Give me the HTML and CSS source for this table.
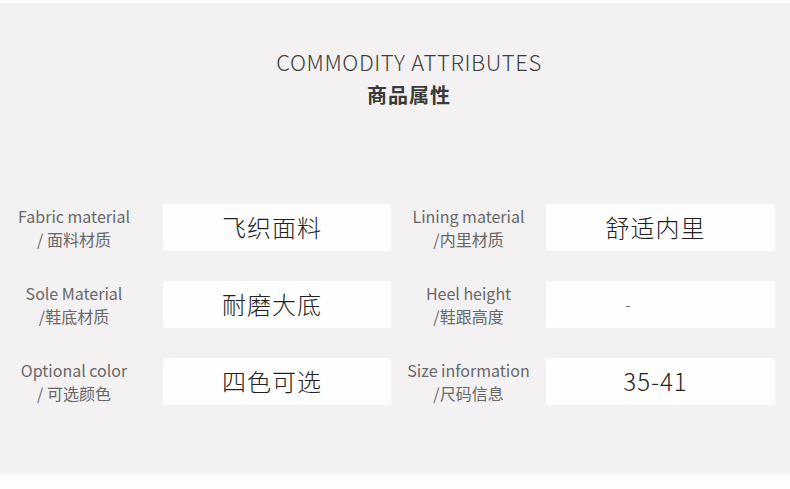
FILE: index.html
```html
<!DOCTYPE html>
<html lang="zh-CN">
<head>
<meta charset="utf-8">
<link rel="stylesheet" href="styles.css">
</head>
<body>
<section class="panel">
  <header class="head">
    <h1 class="title-en">COMMODITY ATTRIBUTES</h1>
    <h2 class="title-cn">商品属性</h2>
  </header>
  <div class="attrs">
    <div class="label"><span>Fabric material</span><span>/ 面料材质</span></div>
    <div class="value">飞织面料</div>
    <div class="label"><span>Lining material</span><span>/内里材质</span></div>
    <div class="value">舒适内里</div>

    <div class="label"><span>Sole Material</span><span>/鞋底材质</span></div>
    <div class="value">耐磨大底</div>
    <div class="label"><span>Heel height</span><span>/鞋跟高度</span></div>
    <div class="value dash">-</div>

    <div class="label"><span>Optional color</span><span>/ 可选颜色</span></div>
    <div class="value">四色可选</div>
    <div class="label"><span>Size information</span><span>/尺码信息</span></div>
    <div class="value">35-41</div>
  </div>
</section>
</body>
</html>
```

FILE: styles.css
```css
html, body {
  margin: 0;
  padding: 0;
  background: #fdfdfd;
}
body {
  font-family: "Noto Sans CJK SC", "Noto Sans", sans-serif;
  width: 790px;
  height: 489px;
  overflow: hidden;
}
.panel {
  margin-top: 3px;
  height: 471px;
  background: #f3f1f2;
  box-sizing: border-box;
  padding-top: 44px;
}
.head {
  text-align: center;
  padding-left: 28px;
}
.title-en {
  margin: 0;
  font-size: 22px;
  font-weight: 300;
  color: #3f3f3f;
  line-height: 28px;
  letter-spacing: 0.6px;
}
.title-cn {
  margin: 7px 0 0;
  font-size: 20px;
  font-weight: 700;
  color: #3a3a3a;
  line-height: 26px;
  letter-spacing: 1px;
}
.attrs {
  margin-top: 96px;
  display: grid;
  grid-template-columns: 148px 243px 155px 229px;
  row-gap: 30px;
  grid-auto-rows: 47px;
}
.attrs > .value:nth-child(4n+2) {
  margin-left: 15px;
}
.label {
  text-align: center;
  font-size: 16px;
  line-height: 23px;
  color: #686868;
  font-weight: 400;
  display: flex;
  flex-direction: column;
  justify-content: center;
}
.value {
  background: #fefefe;
  display: flex;
  align-items: center;
  justify-content: center;
  padding: 0 10px 3px 0;
  font-size: 24px;
  font-weight: 300;
  color: #222;
  letter-spacing: 1px;
}
.value.dash {
  font-size: 18px;
  color: #777;
  padding-right: 64px;
}
```
